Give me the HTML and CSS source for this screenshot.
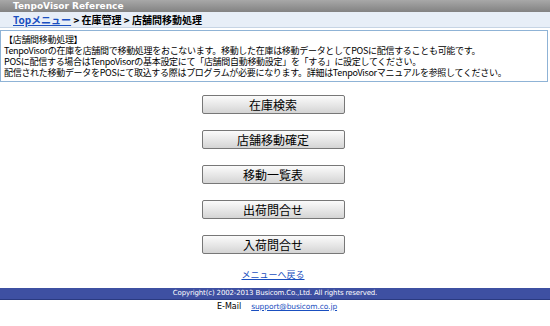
FILE: index.html
```html
<!DOCTYPE html>
<html lang="ja">
<head>
    <meta charset="UTF-8">
    <title>TenpoVisor Reference</title>
    <link rel="stylesheet" href="styles.css">
</head>
<body>

    <div class="title-bar">TenpoVisor Reference</div>

    <div class="crumbs">
        <a href="#">Topメニュー</a> &gt; 在庫管理 &gt; 店舗間移動処理
    </div>

    <div class="info">
        <p>【店舗間移動処理】</p>
        <p>TenpoVisorの在庫を店舗間で移動処理をおこないます。移動した在庫は移動データとしてPOSに配信することも可能です。</p>
        <p>POSに配信する場合はTenpoVisorの基本設定にて「店舗間自動移動設定」を「する」に設定してください。</p>
        <p>配信された移動データをPOSにて取込する際はプログラムが必要になります。詳細はTenpoVisorマニュアルを参照してください。</p>
    </div>

    <div class="menu">
        <button>在庫検索</button>
        <button>店舗移動確定</button>
        <button>移動一覧表</button>
        <button>出荷問合せ</button>
        <button>入荷問合せ</button>
        <a href="#" class="back">メニューへ戻る</a>
    </div>

    <div class="footer">Copyright(c) 2002-2013 Busicom.Co.,Ltd. All rights reserved.</div>

    <div class="mail">
        <span>E-Mail</span>
        <a href="#">support@busicom.co.jp</a>
    </div>

</body>
</html>
```

FILE: styles.css
```css
* {
    margin: 0;
    padding: 0;
    box-sizing: border-box;
}

body {
    width: 550px;
    background: white;
    color: black;
    font-family: "Noto Sans CJK JP", "DejaVu Sans", sans-serif;
    font-size: 10px;
}

a {
    color: #1a4fc0;
}

.title-bar {
    height: 12px;
    padding-left: 13px;
    background: linear-gradient(#a8a8a8, #828282);
    color: white;
    font-family: "DejaVu Sans", sans-serif;
    font-weight: bold;
    font-size: 9px;
    line-height: 12px;
}

.crumbs {
    height: 16px;
    padding-left: 13px;
    background: #e7eef7;
    border-bottom: 1px solid #c6d4e4;
    font-weight: bold;
    font-size: 10px;
    line-height: 16px;
}

.info {
    margin: 2px 2px 0 0;
    padding: 3px 3px 3px;
    border: 1px solid #8fb3d6;
    font-size: 9px;
    line-height: 11px;
    letter-spacing: -0.3px;
}

.info p {
    white-space: nowrap;
}

.menu {
    display: flex;
    flex-direction: column;
    align-items: center;
    gap: 16px;
    margin-top: 13px;
    padding-right: 4px;
}

.menu button {
    width: 143px;
    height: 19px;
    border: 1px solid #777;
    border-radius: 2px;
    background: linear-gradient(#fbfbfb, #e8e8e8 50%, #d4d4d4);
    font-family: "Noto Sans CJK JP", sans-serif;
    font-size: 12px;
    line-height: 17px;
    color: black;
}

.back {
    margin-top: -2px;
    font-size: 9px;
}

.footer {
    height: 12px;
    margin-top: 7px;
    background: #3e50a2;
    border-bottom: 1px solid #2a3a80;
    color: white;
    text-align: center;
    font-family: "DejaVu Sans", sans-serif;
    font-size: 7px;
    letter-spacing: -0.15px;
    line-height: 11px;
}

.mail {
    display: flex;
    justify-content: center;
    gap: 10px;
    margin-top: 2px;
    padding-left: 4px;
    font-family: "DejaVu Sans", sans-serif;
    font-size: 8px;
}

.mail a {
    font-size: 7.5px;
    letter-spacing: -0.1px;
}
```
